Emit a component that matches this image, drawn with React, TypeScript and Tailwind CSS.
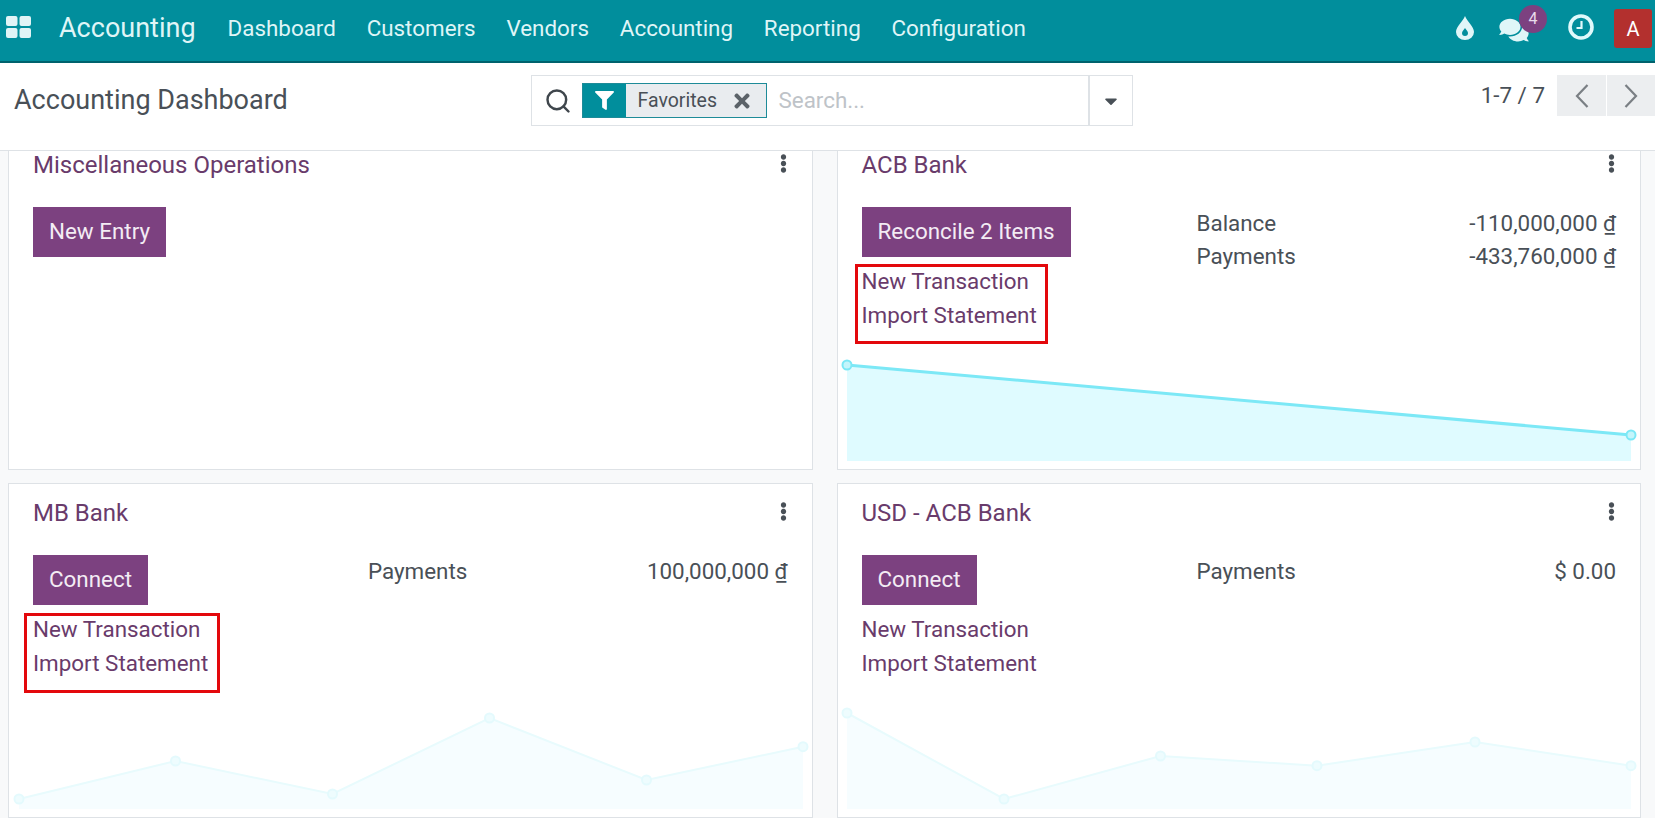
import { Search } from "lucide-react";
import { FaCaretDown, FaComments, FaEllipsisV, FaFilter, FaTimes } from "react-icons/fa";

type Pt = [number, number];

function Chart({ pts, faint }: { pts: Pt[]; faint?: boolean }) {
  const line = pts.map((p) => p.join(",")).join(" ");
  const area = `0,101 ${line} 784,101`;
  return (
    <svg viewBox="0 0 784 100" className="mt-auto mb-[9px] ml-[9.5px] block h-[100px] w-[784px] shrink-0 overflow-visible">
      <polygon points={area} fill={faint ? "#f6fdff" : "#dffbff"} />
      <polyline points={line} fill="none" stroke={faint ? "#e8fbfd" : "#7ce8f6"} strokeWidth={faint ? 2 : 3} />
      {pts.map((p, i) => (
        <circle key={i} cx={p[0]} cy={p[1]} r={4.5} fill={faint ? "#eefcfe" : "#c4f5fb"} stroke={faint ? "#e4fafd" : "#7ce8f6"} strokeWidth={2} />
      ))}
    </svg>
  );
}

function Card({
  title,
  button,
  rows,
  links = true,
  pts,
  faint,
  box,
}: {
  title: string;
  button: string;
  rows: [string, string][];
  links?: boolean;
  pts?: Pt[];
  faint?: boolean;
  box?: string;
}) {
  return (
    <div className="relative flex h-[335px] flex-col border border-[#dee2e6] bg-white">
      <div className="mt-[15px] flex h-[28px] items-center justify-between pl-[24px] pr-[24px]">
        <span className="text-[24px] text-[#693b6b]">{title}</span>
        <FaEllipsisV className="h-[19px] w-[19px] -translate-y-[2px] translate-x-[5px] text-[#495057]" />
      </div>
      <div className="mt-[28px] flex pl-[24px] pr-[24px]">
        <div className="w-[335px] shrink-0">
          <div className="inline-flex h-[50px] items-center bg-[#7c4180] px-[16px] text-[22.4px] text-[#f3ecf4]">{button}</div>
          {links && (
            <div className="mt-[7px] text-[22.4px] leading-[34px] text-[#693b6b]">
              <div>New Transaction</div>
              <div>Import Statement</div>
            </div>
          )}
        </div>
        <div className="flex-1 text-[22.4px] leading-[33px] text-[#495057]">
          {rows.map(([a, b]) => (
            <div key={a} className="flex justify-between">
              <span>{a}</span>
              <span>{b}</span>
            </div>
          ))}
        </div>
      </div>
      {pts && <Chart pts={pts} faint={faint} />}
      {box && <div className={`absolute border-[3px] border-[#e3080c] ${box}`} />}
    </div>
  );
}

export default function App() {
  return (
    <div className="flex h-[818px] w-[1655px] flex-col overflow-hidden bg-[#f8f9fa] font-['Roboto',sans-serif]">
      <nav className="flex h-[63px] shrink-0 items-center border-b-2 border-[#00626d] bg-[#018e9c] text-[#dff5f7]">
        <svg viewBox="0 0 25 22" className="ml-[6px] h-[22px] w-[25px] -translate-y-[4px] fill-[#e0f4f6]">
          <rect x="0" y="0" width="11.5" height="10" rx="2" />
          <rect x="13.5" y="0" width="11.5" height="10" rx="2" />
          <rect x="0" y="12" width="11.5" height="10" rx="2" />
          <rect x="13.5" y="12" width="11.5" height="10" rx="2" />
        </svg>
        <span className="ml-[28px] mr-[32px] -translate-y-[2px] text-[27px] font-normal">Accounting</span>
        <div className="flex -translate-y-[2px] gap-[30.8px] text-[22.4px]">
          <span>Dashboard</span>
          <span>Customers</span>
          <span>Vendors</span>
          <span>Accounting</span>
          <span>Reporting</span>
          <span>Configuration</span>
        </div>
        <div className="ml-auto flex items-center">
          <svg viewBox="0 0 18 24" className="h-[24px] w-[18px] -translate-y-[3px]">
            <path d="M9 0C11 5 18 11 18 16a9 8 0 0 1-18 0C0 11 7 5 9 0Z" fill="#e0f6f8" />
            <path d="M9 12c1 2 3 3 3 5a3 3 0 0 1-6 0c0-2 2-3 3-5Z" fill="#018e9c" />
          </svg>
          <div className="relative ml-[25px] h-[24px] w-[30px] -translate-y-[2px]">
            <FaComments className="h-[26px] w-[30px] text-[#e0f6f8]" />
            <span className="absolute left-[20px] top-[-12px] flex h-[28px] w-[28px] items-center justify-center rounded-full bg-[#7c4180] text-[16px] text-[#e9dcec]">4</span>
          </div>
          <svg viewBox="0 0 26 26" className="ml-[39px] h-[26px] w-[26px] -translate-y-[4px]" fill="none" stroke="#e0f9fb">
            <circle cx="13" cy="13" r="11" strokeWidth="3.6" />
            <path d="M13.5 7v7H8.5" strokeWidth="2.2" />
          </svg>
          <div className="ml-[20px] mr-[3px] flex h-[39px] w-[38px] -translate-y-[2px] items-center justify-center rounded-[3px] bg-[#b3302e] text-[20px] text-white">A</div>
        </div>
      </nav>
      <div className="flex h-[88px] shrink-0 items-start border-b border-[#dee2e6] bg-white">
        <div className="flex h-[74px] w-[531px] shrink-0 items-center pl-[14px] text-[27px] text-[#495057]">Accounting Dashboard</div>
        <div className="mt-[12px] flex h-[51px] w-[602px] shrink-0 items-center border border-[#dee2e6]">
          <Search className="ml-[12px] h-[28px] w-[28px] text-[#3f464c]" strokeWidth={2.1} />
          <div className="ml-[10px] flex h-[35px] items-stretch border border-[#1d8b98] bg-[#e9ecef]">
            <div className="flex w-[43px] items-center justify-center bg-[#018e9c] text-white">
              <FaFilter className="h-[19px] w-[19px]" />
            </div>
            <span className="ml-[11.5px] flex items-center text-[19.5px] text-[#495057]">Favorites</span>
            <FaTimes className="ml-[16px] mr-[15.5px] h-[22px] w-[18px] self-center text-[#5b6268]" />
          </div>
          <span className="ml-[11px] text-[22.4px] text-[#bec3c8]">Search...</span>
          <div className="ml-auto flex h-full w-[44px] items-center justify-center border-l-2 border-[#dee2e6]">
            <FaCaretDown className="h-[20px] w-[16px] text-[#495057]" />
          </div>
        </div>
        <div className="ml-auto mt-[12px] flex h-[41px] items-center">
          <span className="text-[22.4px] text-[#495057]">1-7 / 7</span>
          <div className="ml-[12px] flex h-full w-[49px] items-center justify-center bg-[#eceef0]">
            <svg viewBox="0 0 14 24" className="h-[24px] w-[14px]" fill="none" stroke="#7a7f84" strokeWidth="2.2">
              <polyline points="12.5,1 2,12 12.5,23" />
            </svg>
          </div>
          <div className="ml-[1px] flex h-full w-[48px] items-center justify-center bg-[#eceef0]">
            <svg viewBox="0 0 14 24" className="h-[24px] w-[14px]" fill="none" stroke="#7a7f84" strokeWidth="2.2">
              <polyline points="1.5,1 12,12 1.5,23" />
            </svg>
          </div>
        </div>
      </div>
      <main className="min-h-0 flex-1 overflow-hidden">
        <div className="-mt-[16px] grid grid-cols-2 gap-x-[24px] gap-y-[13px] pl-[8px] pr-[14px]">
          <Card title="Miscellaneous Operations" button="New Entry" rows={[]} links={false} />
          <Card
            title="ACB Bank"
            button="Reconcile 2 Items"
            rows={[
              ["Balance", "-110,000,000 ₫"],
              ["Payments", "-433,760,000 ₫"],
            ]}
            pts={[
              [0, 5],
              [784, 75],
            ]}
            box="left-[17px] top-[128px] h-[80px] w-[193px]"
          />
          <Card
            title="MB Bank"
            button="Connect"
            rows={[["Payments", "100,000,000 ₫"]]}
            faint
            pts={[
              [0, 91],
              [156.5, 53],
              [313.5, 86],
              [470.5, 10],
              [627.5, 72],
              [784, 38.7],
            ]}
            box="left-[15px] top-[129px] h-[80px] w-[196px]"
          />
          <Card
            title="USD - ACB Bank"
            button="Connect"
            rows={[["Payments", "$ 0.00"]]}
            faint
            pts={[
              [0, 5],
              [157, 91],
              [313.5, 48],
              [470, 57.7],
              [628, 34],
              [784, 57.7],
            ]}
          />
        </div>
      </main>
    </div>
  );
}
